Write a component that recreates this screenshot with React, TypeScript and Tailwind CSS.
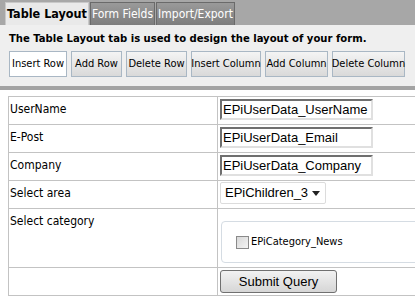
import React from "react";

const tahoma = { fontFamily: '"DejaVu Sans Condensed", "DejaVu Sans", sans-serif' };
const arial = { fontFamily: '"Liberation Sans", Arial, sans-serif' };

function Btn({ label, w, active }: { label: string; w: string; active?: boolean }) {
  return (
    <div
      className={
        "h-[26px] flex items-center justify-center border text-[11px] text-black whitespace-nowrap " +
        w +
        (active
          ? " bg-white border-[#a9b7c4]"
          : " bg-gradient-to-b from-[#f4f4f4] to-[#d9d9d9] border-[#a9b7c4]")
      }
      style={tahoma}
    >
      {label}
    </div>
  );
}

function TextInput({ value }: { value: string }) {
  return (
    <div
      className="w-[153px] h-[21px] bg-white border-2 border-t-[#6f6f6f] border-l-[#6f6f6f] border-r-[#e0e0e0] border-b-[#e0e0e0] flex items-center pl-[1px] text-[13px] text-black"
      style={arial}
    >
      {value}
    </div>
  );
}

export default function App() {
  const rows = [
    ["UserName", "EPiUserData_UserName"],
    ["E-Post", "EPiUserData_Email"],
    ["Company", "EPiUserData_Company"],
  ];
  return (
    <div className="w-[415px] h-[307px] bg-white overflow-hidden">
      {/* tabs */}
      <div className="bg-[#a7a7a7] h-[25px] flex items-end pl-[5px] gap-[1px]">
        <div
          className="h-[23px] w-[84px] bg-[#e9e9e9] border border-b-0 border-[#c8c8c8] flex items-center justify-center text-[12.5px] font-bold text-black"
          style={tahoma}
        >
          Table Layout
        </div>
        <div
          className="h-[23px] w-[65px] bg-gradient-to-b from-[#9a9a9a] to-[#7d7d7d] border border-b-0 border-[#6a6a6a] flex items-center justify-center text-[12px] text-white"
          style={tahoma}
        >
          Form Fields
        </div>
        <div
          className="h-[23px] w-[79px] bg-gradient-to-b from-[#9a9a9a] to-[#7d7d7d] border border-b-0 border-[#6a6a6a] flex items-center justify-center text-[12px] text-white"
          style={tahoma}
        >
          Import/Export
        </div>
      </div>
      {/* panel */}
      <div className="bg-[#efefef] h-[61px] pl-[9px] pt-[7px]">
        <div className="text-[11.2px] font-bold text-black leading-[14px]" style={tahoma}>
          The Table Layout tab is used to design the layout of your form.
        </div>
        <div className="flex gap-[4px] mt-[5px]">
          <Btn label="Insert Row" w="w-[58px]" active />
          <Btn label="Add Row" w="w-[51px]" />
          <Btn label="Delete Row" w="w-[61px]" />
          <Btn label="Insert Column" w="w-[70px]" />
          <Btn label="Add Column" w="w-[63px]" />
          <Btn label="Delete Column" w="w-[73px]" />
        </div>
      </div>
      <div className="h-[4px] bg-[#a3a3a3]" />
      {/* table */}
      <div className="pl-[8px] pt-[6px]">
        <table className="border-collapse w-[430px] text-[12px] text-black" style={tahoma}>
          <tbody>
            {rows.map(([l, v]) => (
              <tr key={l} className="h-[28px]">
                <td className="w-[209px] border border-[#c3c3c3] align-top pl-[1px] pt-[3px]">{l}</td>
                <td className="border border-[#c3c3c3] align-top pl-[2px] pt-[2px]">
                  <TextInput value={v} />
                </td>
              </tr>
            ))}
            <tr className="h-[28px]">
              <td className="border border-[#c3c3c3] align-top pl-[1px] pt-[3px]">Select area</td>
              <td className="border border-[#c3c3c3] align-top pl-[2px] pt-[1px]">
                <div
                  className="w-[106px] h-[22px] border border-[#dcdcdc] rounded-[2px] bg-white flex items-center justify-between pl-[4px] pr-[5px] text-[13px]"
                  style={arial}
                >
                  <span>EPiChildren_3</span>
                  <svg width="8" height="5" viewBox="0 0 8 5">
                    <path d="M0 0 L8 0 L4 5 Z" fill="#222" />
                  </svg>
                </div>
              </td>
            </tr>
            <tr className="h-[59px]">
              <td className="border border-[#c3c3c3] align-top pl-[1px] pt-[3px]">Select category</td>
              <td className="border border-[#c3c3c3] align-top pl-[3px] pt-[12px]">
                <div className="h-[42px] border border-[#d5dce3] rounded-[4px] flex items-center pl-[14px] gap-[2px]">
                  <div className="w-[13px] h-[13px] border border-[#8a8a8a] bg-gradient-to-br from-[#d8d8d8] to-[#f4f4f4]" />
                  <span className="text-[11px]">EPiCategory_News</span>
                </div>
              </td>
            </tr>
            <tr className="h-[28px]">
              <td className="border border-[#c3c3c3]"></td>
              <td className="border border-[#c3c3c3] align-top pl-[2px] pt-[2px]">
                <div
                  className="w-[117px] h-[23px] border border-[#707070] rounded-[3px] bg-gradient-to-b from-[#f2f2f2] to-[#d6d6d6] flex items-center justify-center text-[13px]"
                  style={arial}
                >
                  Submit Query
                </div>
              </td>
            </tr>
          </tbody>
        </table>
      </div>
    </div>
  );
}
